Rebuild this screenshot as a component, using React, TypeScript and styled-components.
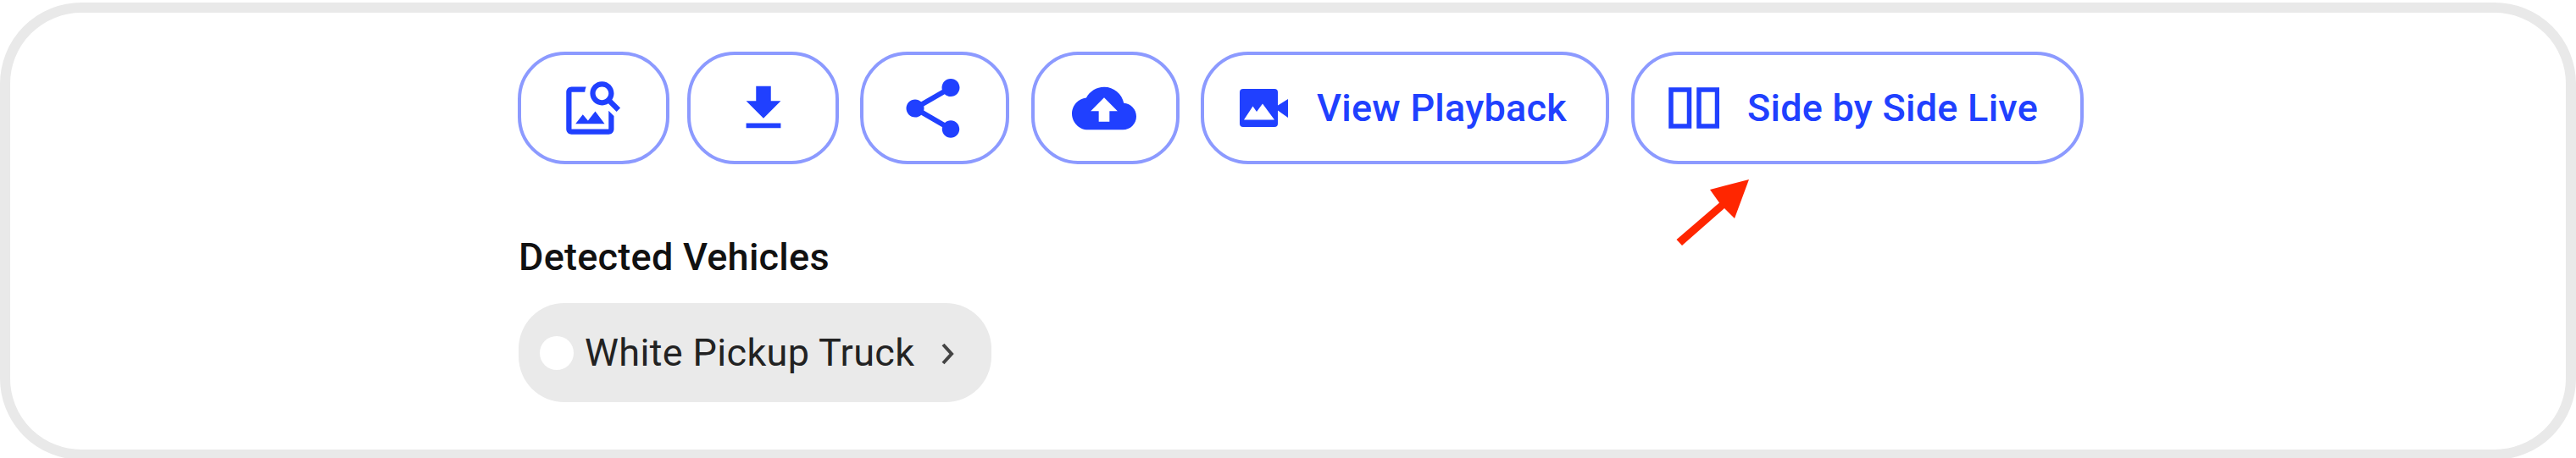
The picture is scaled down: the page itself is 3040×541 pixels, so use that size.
import React from 'react';
import styled, { createGlobalStyle } from 'styled-components';

const GlobalStyle = createGlobalStyle`
  *, *::before, *::after { box-sizing: border-box; }
  body { margin: 0; background: #fff; overflow: hidden; }
`;

const Page = styled.div`
  height: 541px;
  padding-top: 3px;
  overflow: hidden;
  font-family: Roboto, sans-serif;
`;

const Card = styled.main`
  position: relative;
  height: 540px;
  padding: 46px 0 0 599px;
  border: 12px solid #e9e9e9;
  border-radius: 96px;
  background: #fff;
`;

const Toolbar = styled.div`
  display: flex;
`;

const ActionButton = styled.button<{ $width: number; $gap?: number; $inset?: number; $nudge?: number }>`
  display: flex;
  flex: none;
  align-items: center;
  justify-content: ${p => (p.$inset ? 'flex-start' : 'center')};
  width: ${p => p.$width}px;
  height: 133px;
  margin: 0 ${p => p.$gap ?? 0}px 0 0;
  padding: 0 ${p => p.$nudge ?? 0}px 0 ${p => p.$inset ?? 0}px;
  border: 4px solid #8c9aff;
  border-radius: 56px;
  background: #fff;
  color: #2040ff;
  font-family: inherit;

  svg { display: block; flex: none; }
`;

const Label = styled.span<{ $start: number }>`
  margin-left: ${p => p.$start}px;
  font-size: 45px;
  font-weight: 500;
  line-height: 52px;
  letter-spacing: 0.24px;
  white-space: nowrap;
`;

const Heading = styled.h2`
  margin: 84px 0 0 1px;
  font-size: 45px;
  font-weight: 500;
  line-height: 52px;
  letter-spacing: 0.25px;
  color: #111;
`;

const Chip = styled.button`
  display: flex;
  align-items: center;
  width: 558px;
  height: 117px;
  margin: 28px 0 0 1px;
  padding: 0 0 0 25px;
  border: 0;
  border-radius: 54px;
  background: #eaeaea;
  color: #222;
  font-family: inherit;
`;

const Swatch = styled.span`
  flex: none;
  width: 40px;
  height: 40px;
  border-radius: 50%;
  background: #fff;
`;

const ChipText = styled.span`
  margin-left: 13px;
  font-size: 45px;
  line-height: 52px;
  letter-spacing: 0.35px;
  white-space: nowrap;
`;

const Chevron = styled.svg`
  display: block;
  margin: 2px 0 0 32px;
`;

const Pointer = styled.svg`
  position: absolute;
  left: 1964px;
  top: 195px;
`;

const Glyph = ({ size, d }: { size: number; d: string }) => (
  <svg width={size} height={size} viewBox="0 0 24 24" fill="currentColor"><path d={d} /></svg>
);

const icons = {
  search: 'M18 13v7H4V6h5.02c.05-.71.22-1.38.48-2H4c-1.1 0-2 .9-2 2v14c0 1.1.9 2 2 2h14c1.1 0 2-.9 2-2v-5l-2-2zm-1.5 5h-11l2.75-3.53 1.96 2.36 2.75-3.54L16.5 18zm2.8-9.11c.44-.7.7-1.51.7-2.39C20 4.01 17.99 2 15.5 2S11 4.01 11 6.5s2.01 4.5 4.49 4.5c.88 0 1.7-.26 2.39-.7L21 13.42 22.42 12 19.3 8.89zM15.5 9C14.12 9 13 7.88 13 6.5S14.12 4 15.5 4 18 5.12 18 6.5 16.88 9 15.5 9z',
  download: 'M19 9h-4V3H9v6H5l7 7 7-7zM5 18v2h14v-2H5z',
  share: 'M18 16.08c-.76 0-1.44.3-1.96.77L8.91 12.7c.05-.23.09-.46.09-.7s-.04-.47-.09-.7l7.05-4.11c.54.5 1.25.81 2.04.81 1.66 0 3-1.34 3-3s-1.34-3-3-3-3 1.34-3 3c0 .24.04.47.09.7L8.04 9.81C7.5 9.31 6.79 9 6 9c-1.66 0-3 1.34-3 3s1.34 3 3 3c.79 0 1.5-.31 2.04-.81l7.12 4.16c-.05.21-.08.43-.08.65 0 1.61 1.31 2.92 2.92 2.92s2.92-1.31 2.92-2.92-1.31-2.92-2.92-2.92z',
  upload: 'M19.35 10.04C18.67 6.59 15.64 4 12 4 9.11 4 6.6 5.64 5.35 8.04 2.34 8.36 0 10.91 0 14c0 3.31 2.69 6 6 6h13c2.76 0 5-2.24 5-5 0-2.64-2.05-4.78-4.65-4.96zM14 13v4h-4v-4H7l5-5 5 5h-3z',
};

export default function App() {
  return (
    <Page>
      <GlobalStyle />
      <Card>
        <Toolbar>
          <ActionButton aria-label="Search image" $width={179} $gap={21} $nudge={3}><Glyph size={75} d={icons.search} /></ActionButton>
          <ActionButton aria-label="Download" $width={179} $gap={25}><Glyph size={70} d={icons.download} /></ActionButton>
          <ActionButton aria-label="Share" $width={176} $gap={26} $nudge={4}><Glyph size={84} d={icons.share} /></ActionButton>
          <ActionButton aria-label="Upload" $width={175} $gap={25} $nudge={3}><Glyph size={76} d={icons.upload} /></ActionButton>
          <ActionButton $width={482} $gap={26} $inset={42}>
            <svg width="58" height="45" viewBox="0 0 58 45" fill="currentColor">
              <path fillRule="evenodd" d="M4 0h37q4 0 4 4v15.500L57 12v22L45 25.500V41q0 4-4 4H4q-4 0-4-4V4q0-4 4-4ZM5 36.500h36L27 17.500l-7 9.500-4.500-6.500Z" />
            </svg>
            <Label $start={33}>View Playback</Label>
          </ActionButton>
          <ActionButton $width={534} $inset={40}>
            <svg width="60" height="49" viewBox="0 0 60 49" fill="none" stroke="currentColor" strokeWidth="5.500">
              <rect x="3" y="3" width="21.500" height="43" />
              <rect x="36" y="3" width="21.500" height="43" />
            </svg>
            <Label $start={33}>Side by Side Live</Label>
          </ActionButton>
        </Toolbar>
        <Heading>Detected Vehicles</Heading>
        <Chip>
          <Swatch />
          <ChipText>White Pickup Truck</ChipText>
          <Chevron width="16" height="26" viewBox="0 0 16 26" fill="none" stroke="#444" strokeWidth="4">
            <path d="m2 2 10 11L2 24" />
          </Chevron>
        </Chip>
        <Pointer width="92" height="82" viewBox="0 0 92 82" fill="#ff2600">
          <path d="M88 2 42 14l11 15.500L2.500 73l6.500 7L59 36 71 48Z" />
        </Pointer>
      </Card>
    </Page>
  );
}
